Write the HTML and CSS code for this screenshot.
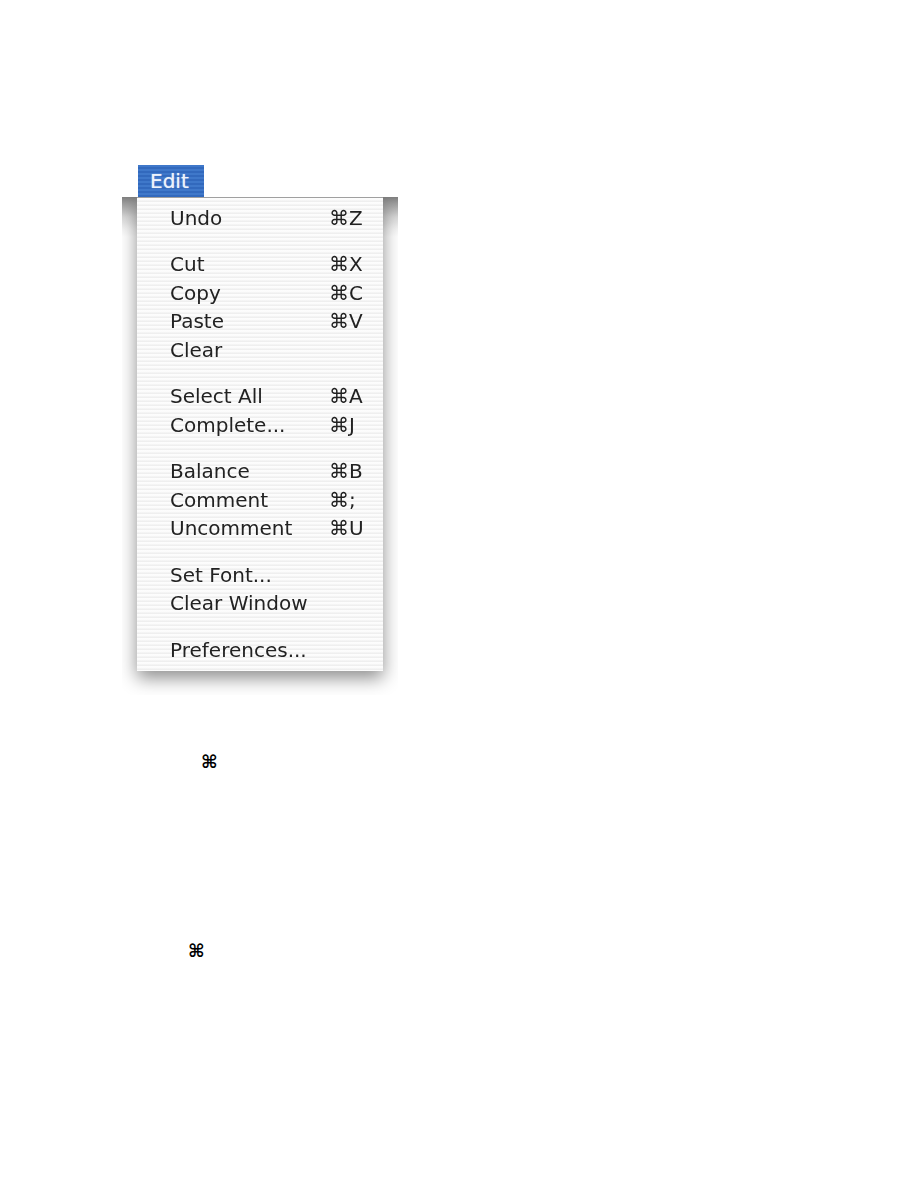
FILE: index.html
```html
<!DOCTYPE html>
<html lang="en">
<head>
    <meta charset="UTF-8">
    <meta name="viewport" content="width=device-width, initial-scale=1.0">
    <title>Edit menu</title>
    <link rel="stylesheet" href="styles.css">
</head>
<body>
    <div class="menu-title">Edit</div>
    <div class="menu-shadow">
        <div class="menu">
            <div class="item"><span>Undo</span><span class="key">⌘Z</span></div>
            <div class="gap"></div>
            <div class="item"><span>Cut</span><span class="key">⌘X</span></div>
            <div class="item"><span>Copy</span><span class="key">⌘C</span></div>
            <div class="item"><span>Paste</span><span class="key">⌘V</span></div>
            <div class="item"><span>Clear</span></div>
            <div class="gap"></div>
            <div class="item"><span>Select All</span><span class="key">⌘A</span></div>
            <div class="item"><span>Complete...</span><span class="key">⌘J</span></div>
            <div class="gap"></div>
            <div class="item"><span>Balance</span><span class="key">⌘B</span></div>
            <div class="item"><span>Comment</span><span class="key">⌘;</span></div>
            <div class="item"><span>Uncomment</span><span class="key">⌘U</span></div>
            <div class="gap"></div>
            <div class="item"><span>Set Font...</span></div>
            <div class="item"><span>Clear Window</span></div>
            <div class="gap"></div>
            <div class="item"><span>Preferences...</span></div>
        </div>
    </div>
    <div class="cmd cmd-first">⌘</div>
    <div class="cmd cmd-second">⌘</div>
</body>
</html>
```

FILE: styles.css
```css
body {
    margin: 0;
    padding-top: 165px;
    background: white;
    font-family: "DejaVu Sans", sans-serif;
}
.menu-title {
    width: 66px;
    height: 32px;
    margin-left: 138px;
    box-sizing: border-box;
    padding-left: 12px;
    line-height: 33px;
    font-size: 20px;
    color: #eef3fb;
    text-shadow: 0 0 1px rgba(238, 243, 251, 0.7);
    background: repeating-linear-gradient(to bottom, #3f78ca 0, #3f78ca 2px, #3269bd 2px, #3269bd 4px);
}
.menu-shadow {
    width: 276px;
    height: 498px;
    margin-left: 122px;
    box-sizing: border-box;
    padding-left: 15px;
    overflow: hidden;
    background: linear-gradient(to bottom, #808080 0, #a0a0a0 7px, #d8d8d8 20px, #f4f4f4 32px, #fff 40px) no-repeat top / 100% 40px;
}
.menu {
    width: 246px;
    height: 474px;
    box-sizing: border-box;
    padding: 5.5px 0 7px;
    border-top: 1px solid #a0a0a0;
    background: repeating-linear-gradient(to bottom, #fdfdfd 0, #fbfbfb 2px, #eeeeee 3px, #f0f0f0 4px);
    box-shadow: 0 7px 17px rgba(0, 0, 0, 0.45);
}
.item {
    display: flex;
    justify-content: space-between;
    height: 28.5px;
    padding-left: 33px;
    line-height: 28.5px;
    font-size: 20px;
    color: #222;
}
.item span {
    filter: blur(0.5px);
}
.item .key {
    width: 54px;
}
.gap {
    height: 18px;
}
.cmd {
    font-size: 18px;
    font-weight: bold;
    line-height: 20px;
    color: black;
}
.cmd-first {
    margin: 57px 0 0 201px;
}
.cmd-second {
    margin: 169px 0 0 188px;
}
```
